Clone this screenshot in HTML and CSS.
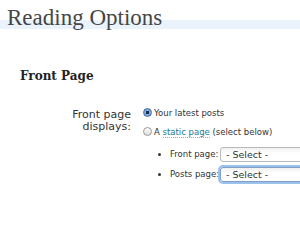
FILE: index.html
```html
<!DOCTYPE html>
<html lang="en">
<head>
    <meta charset="UTF-8">
    <title>Reading Options</title>
    <link rel="stylesheet" href="styles.css">
</head>
<body>
    <h1 class="title">Reading Options</h1>

    <h2 class="section">Front Page</h2>

    <div class="row">
        <div class="label">Front page<br>displays:</div>
        <div class="field">
            <label class="choice"><input type="radio" name="show" checked>Your latest posts</label>
            <label class="choice"><input type="radio" name="show">A <a href="#">static page</a> (select below)</label>
            <ul class="pages">
                <li><span class="name">Front page:</span><select><option>- Select -</option></select></li>
                <li><span class="name">Posts page:</span><select class="focus"><option>- Select -</option></select></li>
            </ul>
        </div>
    </div>
</body>
</html>
```

FILE: styles.css
```css
body {
    margin: 0;
    font-family: "DejaVu Sans", sans-serif;
    font-size: 8.5px;
    color: #333;
    background: #fff;
    overflow: hidden;
}
.title {
    margin: 0;
    padding: 3px 0 0 7px;
    font-family: "Liberation Serif", serif;
    font-weight: normal;
    font-size: 23px;
    line-height: 30px;
    color: #464646;
    background: linear-gradient(to bottom, #fff 0, #fff 20px, #eaf3fc 20px, #eaf3fc 29px, #fff 29px);
}
.section {
    margin: 35px 0 0 20px;
    font-family: "DejaVu Serif", serif;
    font-size: 12px;
    line-height: 16px;
    color: #222;
}
.row {
    display: flex;
    margin-top: 22px;
}
.label {
    flex: 0 0 131px;
    padding-top: 3px;
    text-align: right;
    font-size: 11px;
    line-height: 12px;
    color: #333;
}
.field {
    flex: 1;
    min-width: 0;
    overflow: hidden;
    padding: 0 0 3px 12px;
    white-space: nowrap;
}
.choice {
    display: block;
    line-height: 14px;
    margin-bottom: 5px;
}
.choice input {
    appearance: none;
    width: 9px;
    height: 9px;
    margin: 0 2px 0 0;
    vertical-align: -1px;
    border: 1px solid #9a9a9a;
    border-radius: 50%;
    background: linear-gradient(to bottom, #fdfdfd, #dedede);
}
.choice input:checked {
    border-color: #4a6f9c;
    background: radial-gradient(circle, #1d2f48 0, #1d2f48 1.6px, #7eb0e6 2px, #5a8fcf 100%);
}
a {
    color: #21759b;
    text-decoration: none;
    border-bottom: 1px dotted #7fb0cf;
}
.pages {
    margin: 8px 0 0;
    padding-left: 27px;
}
.pages li {
    line-height: 15px;
    margin-bottom: 5px;
}
.name {
    display: inline-block;
    width: 50px;
}
select {
    appearance: none;
    width: 100px;
    height: 15px;
    padding: 0 0 0 5px;
    vertical-align: top;
    font-family: "DejaVu Sans", sans-serif;
    font-size: 9.5px;
    color: #333;
    border: 1px solid #b9b9b9;
    border-radius: 3px;
    background: linear-gradient(to bottom, #f0f0f0, #fff 40%);
}
.focus {
    border-color: #7d9fcc;
    box-shadow: 0 0 0 2px #9cc1ea;
}
```
